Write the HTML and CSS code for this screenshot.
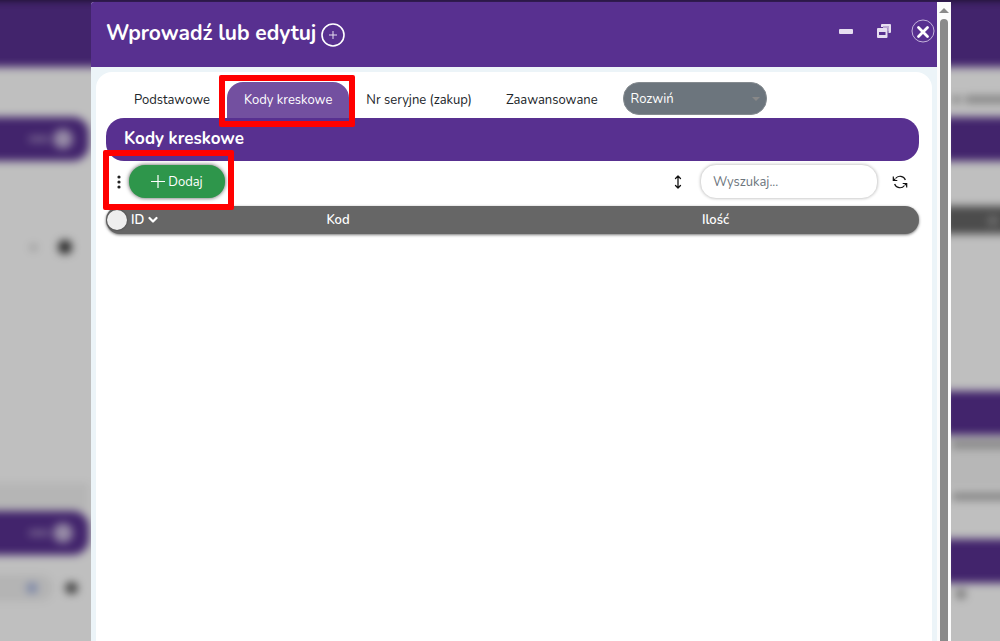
FILE: index.html
```html
<!DOCTYPE html>
<html lang="pl">

<head>
  <meta charset="UTF-8" />
  <meta name="viewport" content="width=device-width, initial-scale=1.0"/>
  <title>Wprowadź lub edytuj</title>
  <link rel="stylesheet" href="styles.css">
</head>

<body>
  <!-- page under the modal -->
  <div class="page" aria-hidden="true">
    <div class="page-top"></div>
    <div class="page-columns">
      <div class="page-left">
        <div class="bar bar-round"><span class="smudge"></span><span class="dot"></span></div>
        <div class="page-tools"><span class="small-dot"></span><span class="dark-dot"></span></div>
        <div class="page-band"></div>
        <div class="bar bar-round"><span class="smudge"></span><span class="dot"></span></div>
        <div class="page-search"><span class="field"><span class="blue-dot"></span></span><span class="lens"></span></div>
      </div>
      <div class="page-right">
        <div class="line line-tall"><span class="word short"></span><span class="word"></span></div>
        <div class="bar"></div>
        <div class="head"><span class="knob"></span></div>
        <div class="bar"></div>
        <div class="line line-grey"><span class="word"></span></div>
        <div class="line"><span class="word"></span></div>
        <div class="bar"></div>
        <div class="line line-low"><span class="knob"></span></div>
      </div>
    </div>
  </div>
  <div class="backdrop"></div>

  <div class="modal">
    <div class="modal-main">
      <header class="modal-header">
        <h1>Wprowadź lub edytuj</h1>
        <button class="round-btn" aria-label="Nowy">
          <svg width="24" height="24" viewBox="0 0 24 24" fill="none" stroke="#fff"><circle cx="12" cy="12" r="11" stroke-width="1.6"/><path d="M12 8v8M8 12h8" stroke-width="1" stroke="#e6def0"/></svg>
        </button>
        <div class="window-btns">
          <button aria-label="Minimalizuj">
            <svg width="14" height="16" viewBox="0 0 14 16"><rect y="6" width="14" height="5" rx="1" fill="#e6def0"/></svg>
          </button>
          <button aria-label="Przywróć">
            <svg width="14" height="16" viewBox="0 0 14 16"><path fill="#e6def0" fill-rule="evenodd" d="M5 1h8q1 0 1 1v7q0 1-1 1h-1.500V8h.5V3H6v1H4V2q0-1 1-1zM1 5h8.500q1 0 1 1v8q0 1-1 1H1q-1 0-1-1V6q0-1 1-1zM2 9v3h6.500V9z"/><path fill="#bba8d4" d="M6 3h6v5h-1.500V6q0-1-1-1H6z"/></svg>
          </button>
          <button class="close-btn" aria-label="Zamknij">
            <svg width="24" height="24" viewBox="0 0 24 24" fill="none"><circle cx="12" cy="12" r="11" stroke="#c4b3da"/><path d="M7.500 8.500l9 9M16.500 8.500l-9 9" stroke="#fff" stroke-width="2.800" stroke-linecap="round"/></svg>
          </button>
        </div>
      </header>

      <div class="modal-body">
        <div class="panel">
          <nav class="tabs">
            <a href="#">Podstawowe</a>
            <a href="#" class="active marked">Kody kreskowe</a>
            <a href="#">Nr seryjne (zakup)</a>
            <a href="#">Zaawansowane</a>
            <div class="select-wrap">
              <select aria-label="Rozwiń">
                <option>Rozwiń</option>
              </select>
            </div>
          </nav>

          <h2>Kody kreskowe</h2>

          <div class="toolbar">
            <div class="toolbar-left marked">
              <button class="menu-btn" aria-label="Menu">
                <svg width="4" height="14" viewBox="0 0 4 14" fill="#222"><circle cx="2" cy="2" r="1.600"/><circle cx="2" cy="7" r="1.600"/><circle cx="2" cy="12" r="1.600"/></svg>
              </button>
              <button class="green-btn">
                <svg width="14" height="14" viewBox="0 0 14 14" stroke="#fff" stroke-width="1.200"><path d="M7 0v13M0 6.500h14"/></svg>
                Dodaj
              </button>
            </div>
            <button class="sort-btn" aria-label="Sortuj">
              <svg width="8" height="14" viewBox="0 0 8 14" fill="none" stroke="#111" stroke-width="1.300" stroke-linecap="round" stroke-linejoin="round"><path d="M4 1.500v11M1.500 3.500L4 1l2.500 2.500M1.500 10.500L4 13l2.500-2.500"/></svg>
            </button>
            <input type="search" class="search" placeholder="Wyszukaj..." aria-label="Wyszukaj">
            <button class="refresh-btn" aria-label="Odśwież">
              <svg width="16" height="14" viewBox="0 0 16 14" fill="none" stroke="#111" stroke-width="1.200"><path d="M3.500 3.500A5.700 5.700 0 0 1 13.400 5M12.500 10.500A5.700 5.700 0 0 1 2.600 9"/><path d="M1.300 1.500v4h4M14.700 12.500v-4h-4"/><path d="M1.300 2.500v3h3zM14.700 11.500v-3h-3z" fill="#111" stroke="none"/></svg>
            </button>
          </div>

          <table>
            <thead>
              <tr>
                <th class="col-id">
                  <div class="id-cell">
                    <input type="checkbox" aria-label="Zaznacz wszystkie">
                    ID
                    <svg width="10" height="8" viewBox="0 0 10 8" fill="none" stroke="#fff" stroke-width="2.200" stroke-linecap="round" stroke-linejoin="round"><path d="M1.500 2L5 5.500 8.500 2"/></svg>
                  </div>
                </th>
                <th class="col-kod">Kod</th>
                <th>Ilość</th>
              </tr>
            </thead>
          </table>
        </div>
      </div>
    </div>

    <div class="scrollbar" aria-hidden="true">
      <span class="arrow"></span>
      <span class="thumb"></span>
    </div>
  </div>
</body>

</html>
```
FILE: styles.css
```css
* { box-sizing: border-box; }
body { margin: 0; height: 100vh; overflow: hidden; background: #1a0f2b; font-family: 'Nunito', 'Open Sans', sans-serif; font-size: 13px; color: #212529; }
button { border: 0; padding: 0; background: none; color: inherit; font: inherit; cursor: pointer; display: flex; align-items: center; justify-content: center; }
svg { display: block; }

/* page behind, a bit wider than the window so the blur has no soft edge */
.page { position: absolute; inset: 0 -12px -12px; overflow: hidden; display: flex; flex-direction: column; background: #fff; filter: blur(4px); }
.page-top { height: 67px; flex: none; background: #583090; }
.page-columns { display: flex; flex: 1; justify-content: space-between; }
.page-left { width: 101px; padding-top: 50px; }
.page-right { width: 68px; }
.bar { height: 44px; background: #583090; display: flex; align-items: center; justify-content: flex-end; gap: 4px; padding-right: 16px; }
.bar-round { border-radius: 0 16px 16px 0; }
.smudge { width: 20px; height: 6px; background: #9a80bd; }
.dot { width: 20px; height: 20px; border-radius: 50%; background: #c9b9de; }
.page-tools { height: 172px; display: flex; justify-content: flex-end; align-items: center; gap: 22px; padding-right: 17px; }
.small-dot { width: 5px; height: 5px; border-radius: 50%; background: #999; }
.dark-dot { width: 14px; height: 14px; border-radius: 50%; background: #333; }
.page-band { height: 28px; margin-top: 150px; background: #f2f2f2; }
.page-search { margin-top: 20px; display: flex; align-items: center; gap: 12px; }
.field { width: 65px; height: 26px; background: #f0f0f0; display: flex; align-items: center; justify-content: flex-end; padding-right: 16px; border-radius: 0 12px 12px 0; }
.blue-dot { width: 10px; height: 10px; background: #a6b4e0; }
.lens { width: 13px; height: 12px; border-radius: 50%; background: #555; }
.head { height: 28px; margin: 45px 0 157px; padding: 10px 0 0 44px; background: #666; }
.line { height: 52px; padding: 6px 0 0 8px; display: flex; gap: 5px; }
.line-tall { height: 50px; padding-top: 29px; }
.line-grey { background: #f4f4f4; }
.line-low { padding-left: 12px; }
.word { width: 60px; height: 7px; background: #aaa; }
.word.short { width: 10px; }
.knob { width: 10px; height: 10px; border-radius: 50%; background: #999; display: block; }
.backdrop { position: absolute; inset: 0; background: rgba(0, 0, 0, 0.25); }

/* modal */
.modal { position: relative; height: 100%; padding-top: 2px; margin: 0 49px 0 91px; display: flex; }
.modal-main { flex: 1; display: flex; flex-direction: column; background: #ecf4f8; border-radius: 3px 0 0 0; }
.modal-header { height: 65px; flex: none; display: flex; align-items: center; background: #583090; color: #fff; padding: 0 2px 0 15px; border-radius: 3px 0 0 0; }
.modal-header h1 { margin: 0 5px 4px 0; font-size: 21px; line-height: 28px; font-weight: 700; }
.window-btns { margin-left: auto; margin-bottom: 8px; display: flex; align-items: center; gap: 24px; }
.close-btn { margin-left: -4px; }
.modal-body { flex: 1; padding: 5px 5px 0; display: flex; }
.panel { flex: 1; background: #fff; border-radius: 16px 16px 0 0; padding: 10px 13px 0 10px; }

.tabs { display: flex; height: 36px; padding-left: 11px; }
.tabs a { color: #212529; text-decoration: none; padding: 0 17px; line-height: 36px; white-space: nowrap; }
.tabs a.active { background: #7350a0; color: #fff; border-radius: 16px 16px 0 0; }
.select-wrap { position: relative; width: 144px; height: 33px; margin-left: 8px; }
.select-wrap::after { content: ""; position: absolute; right: 7px; top: 15px; border: 4px solid transparent; border-top-color: #888; border-bottom: 0; }
select { appearance: none; width: 100%; height: 100%; border: 1px solid #858b90; border-radius: 16px; background: #6c757d; color: #fff; font: inherit; padding: 0 7px; }

/* red frames */
.marked { position: relative; }
.marked::after { content: ""; position: absolute; z-index: 2; border: 6px solid #f00; border-radius: 2px; pointer-events: none; }
.tabs .marked::after { inset: -7px -6px -9px -8px; }
.toolbar .marked::after { inset: -15px -9px -12px -3px; }

h2 { margin: 0; height: 43px; line-height: 42px; padding-left: 18px; border-radius: 18px; background: #583090; color: #fff; font-size: 17px; font-weight: 700; }

.toolbar { display: flex; align-items: center; height: 41px; margin-bottom: 4px; padding-right: 11px; }
.toolbar-left { display: flex; align-items: center; height: 33px; margin-right: auto; padding-left: 11px; }
.menu-btn { margin-right: 8px; }
.green-btn { width: 96px; height: 33px; gap: 3px; border-radius: 16px; background: #2e964b; color: #fff; box-shadow: 0 0 4px #555; }
.sort-btn { margin-right: 18px; }
.search { width: 178px; height: 35px; margin-right: 14px; border: 1px solid #ddd; border-radius: 16px; padding: 0 12px; background: #fff; font: inherit; box-shadow: 0 0 3px #ccc; }
.search::placeholder { color: #6c757d; opacity: 1; }

table { width: 100%; border-spacing: 0; table-layout: fixed; border-radius: 14px; background: #666; box-shadow: 0 1px 3px #777; }
th { height: 28px; padding: 0; color: #fff; font-weight: 600; text-align: center; line-height: 20px; }
.col-id { width: 58px; }
.col-kod { width: 348px; }
.id-cell { display: flex; align-items: center; gap: 4px; white-space: nowrap; }
.id-cell input { appearance: none; flex: none; width: 20px; height: 20px; margin: 0 0 0 1px; border-radius: 50%; background: #eee; box-shadow: 0 0 2px #333; }

.scrollbar { width: 14px; background: #fcfcfc; display: flex; flex-direction: column; align-items: center; padding-top: 6px; }
.arrow { border: 5px solid transparent; border-bottom-color: #8a8a8a; border-top: 0; }
.thumb { flex: 1; width: 8px; margin-top: 6px; border-radius: 4px 4px 0 0; background: #8a8a8a; }
```
